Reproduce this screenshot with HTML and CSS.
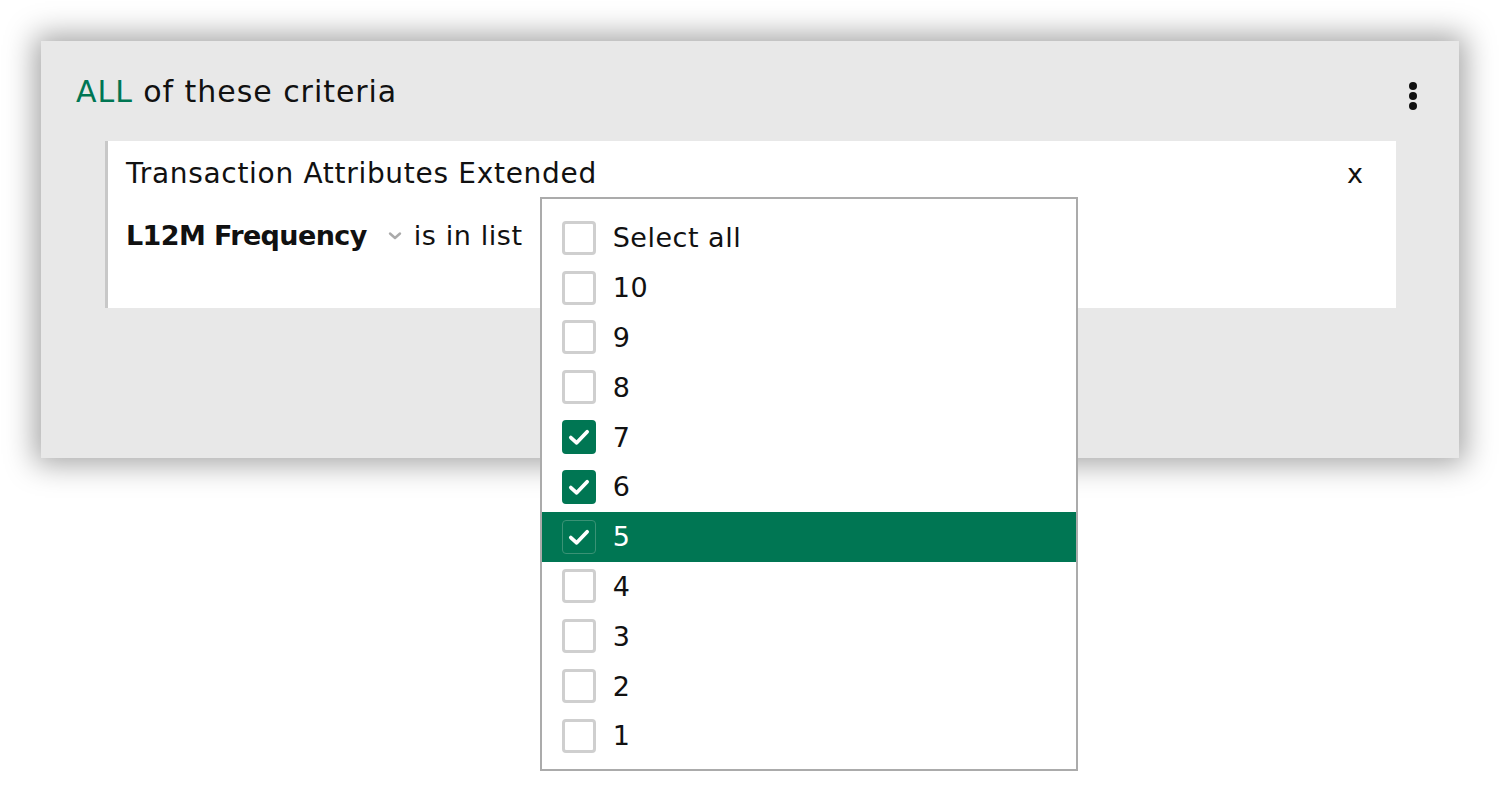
FILE: index.html
```html
<!DOCTYPE html>
<html>
<head>
<meta charset="utf-8">
<link rel="stylesheet" href="styles.css">
</head>
<body>
<div class="panel">
  <div class="panel-head">
    <div class="title"><span class="all">ALL</span> of these criteria</div>
    <div class="kebab"><span></span><span></span><span></span></div>
  </div>
  <div class="card">
    <div class="card-head">
      <div class="card-title">Transaction Attributes Extended</div>
      <div class="close">x</div>
    </div>
    <div class="rule">
      <span class="field">L12M Frequency</span>
      <svg class="chev" width="14" height="10" viewBox="0 0 14 10"><path d="M2 2.5 L7 7 L12 2.5" fill="none" stroke="#aaa" stroke-width="2.4" stroke-linecap="round" stroke-linejoin="round"/></svg>
      <span class="op">is in list</span>
      <div class="menu-anchor">
        <ul class="menu">
          <li class="item"><span class="box"></span><span>Select all</span></li>
          <li class="item"><span class="box"></span><span>10</span></li>
          <li class="item"><span class="box"></span><span>9</span></li>
          <li class="item"><span class="box"></span><span>8</span></li>
          <li class="item"><span class="box checked"><svg viewBox="0 0 24 24"><path d="M5 12.5 L10 17 L19 7.5" fill="none" stroke="#fff" stroke-width="3.2" stroke-linecap="round" stroke-linejoin="round"/></svg></span><span>7</span></li>
          <li class="item"><span class="box checked"><svg viewBox="0 0 24 24"><path d="M5 12.5 L10 17 L19 7.5" fill="none" stroke="#fff" stroke-width="3.2" stroke-linecap="round" stroke-linejoin="round"/></svg></span><span>6</span></li>
          <li class="item active"><span class="box checked"><svg viewBox="0 0 24 24"><path d="M5 12.5 L10 17 L19 7.5" fill="none" stroke="#fff" stroke-width="3.2" stroke-linecap="round" stroke-linejoin="round"/></svg></span><span>5</span></li>
          <li class="item"><span class="box"></span><span>4</span></li>
          <li class="item"><span class="box"></span><span>3</span></li>
          <li class="item"><span class="box"></span><span>2</span></li>
          <li class="item"><span class="box"></span><span>1</span></li>
        </ul>
      </div>
    </div>
  </div>
</div>
</body>
</html>
```

FILE: styles.css
```css
html, body {
  margin: 0;
  padding: 0;
  background: #fff;
}
body {
  font-family: "DejaVu Sans", "Liberation Sans", sans-serif;
  color: #111;
  padding: 41px 42px 0 41px;
  min-height: 804px;
  box-sizing: border-box;
}
.panel {
  background: #e8e8e8;
  height: 417px;
  box-shadow: 0 0 28px 6px rgba(0,0,0,0.36);
  padding: 0 63px 0 64px;
  box-sizing: border-box;
}
.panel-head {
  display: flex;
  justify-content: space-between;
  align-items: center;
  height: 100px;
  margin-left: -29px;
  margin-right: -21px;
}
.title {
  font-size: 30px;
  line-height: 36px;
  margin-top: 2px;
  letter-spacing: 0.95px;
}
.all { color: #007653; }
.kebab {
  display: flex;
  flex-direction: column;
  gap: 2px;
  margin-top: 10px;
}
.kebab span {
  width: 8px;
  height: 8px;
  border-radius: 50%;
  background: #111;
}
.card {
  background: #fff;
  border-left: 3px solid #c8c8c8;
  height: 167px;
  box-sizing: border-box;
  padding: 0 33px 0 18px;
}
.card-head {
  display: flex;
  justify-content: space-between;
  align-items: center;
  height: 64px;
}
.card-title {
  font-size: 28px;
  letter-spacing: 0.7px;
}
.close {
  font-size: 27px;
}
.rule {
  display: flex;
  align-items: center;
  font-size: 27px;
  height: 44px;
  margin-top: 8px;
}
.field {
  font-weight: bold;
  letter-spacing: -0.6px;
}
.chev { margin: 2px 12px 0 21px; }
.op { letter-spacing: 0.6px; }
.menu-anchor {
  position: relative;
  align-self: stretch;
}
.menu {
  position: absolute;
  left: 17px;
  top: -16px;
  width: 538px;
  height: 574px;
  box-sizing: border-box;
  margin: 0;
  padding: 14px 0 0 0;
  list-style: none;
  background: #fff;
  border: 2px solid #ababab;
  z-index: 5;
}
.item {
  display: flex;
  align-items: center;
  height: 49.8px;
  padding-left: 20px;
  gap: 17px;
  font-size: 27px;
  color: #111;
  letter-spacing: 0.5px;
}
.box {
  width: 34px;
  height: 34px;
  box-sizing: border-box;
  border: 3px solid #cfcfcf;
  border-radius: 4px;
  display: flex;
  align-items: center;
  justify-content: center;
  background: #fff;
}
.box.checked {
  background: #007653;
  border-color: #007653;
}
.box svg { width: 28px; height: 28px; }
.item.active {
  background: #007653;
  color: #fff;
}
.item.active .box {
  border: 1px solid #3a9275;
}
```
